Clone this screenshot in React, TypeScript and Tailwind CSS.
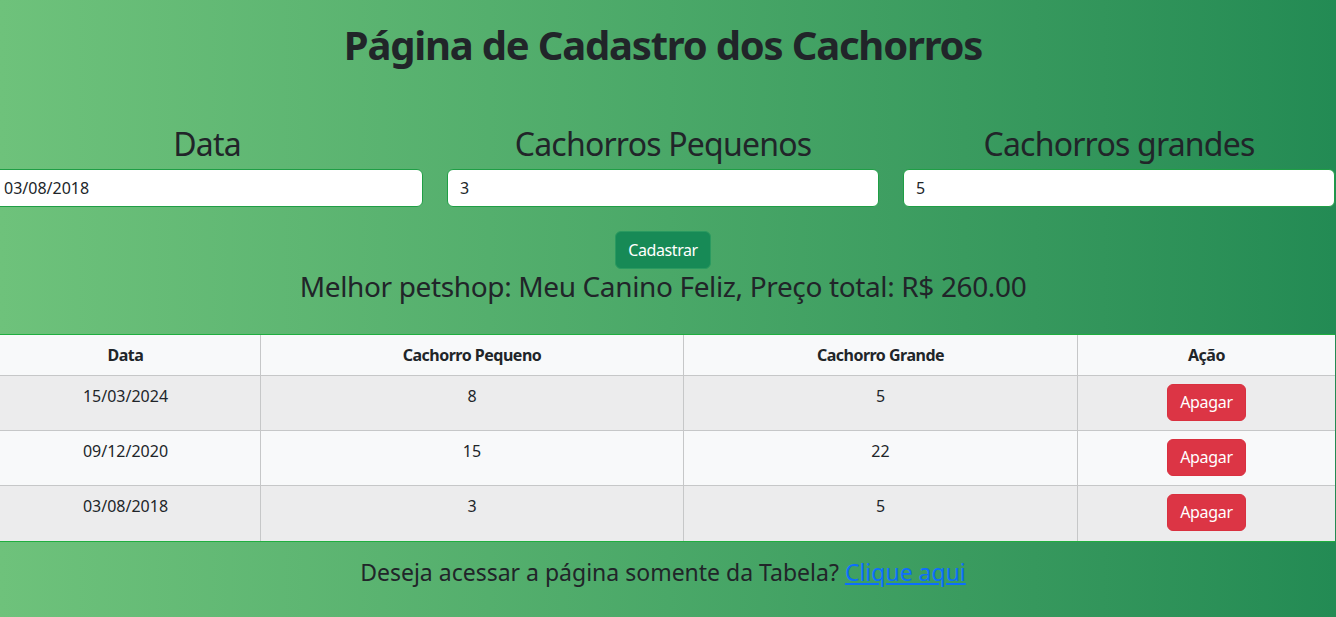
const rows = [
  { data: "15/03/2024", pequeno: "8", grande: "5" },
  { data: "09/12/2020", pequeno: "15", grande: "22" },
  { data: "03/08/2018", pequeno: "3", grande: "5" },
];

export default function App() {
  return (
    <div className="min-h-screen overflow-hidden bg-gradient-to-r from-[#6ec27b] via-[#4aa868] to-[#238b54] font-['Noto_Sans',sans-serif] text-[#212529]">
      <div className="-ml-[9px] w-[1344px]">
        <h1 className="pt-[21px] text-center text-[40px] font-bold leading-[1.2] tracking-[-1.2px]">
          Página de Cadastro dos Cachorros
        </h1>

        <div className="mt-[56px] grid grid-cols-3 gap-6">
          {[
            { label: "Data", value: "03/08/2018" },
            { label: "Cachorros Pequenos", value: "3" },
            { label: "Cachorros grandes", value: "5" },
          ].map((f) => (
            <div key={f.label}>
              <h2 className="mb-[6px] text-center text-[32px] leading-[1.2] tracking-[-0.8px]">{f.label}</h2>
              <input
                type="text"
                defaultValue={f.value}
                className="block h-[38px] w-full rounded-md border border-[#1f9e45] bg-white px-3 text-base text-[#212529] outline-none"
              />
            </div>
          ))}
        </div>

        <div className="mt-6 flex justify-center">
          <button className="h-[38px] rounded-md border border-[#2a9a60] bg-[#178a56] px-3 text-base tracking-[-0.4px] text-white">
            Cadastrar
          </button>
        </div>

        <h3 className="mt-[1px] text-center text-[28px] leading-[1.2] tracking-[-0.36px]">
          Melhor petshop: Meu Canino Feliz, Preço total: R$ 260.00
        </h3>

        <div className="mt-[30px] border-y border-[#1fae3f]">
          <table className="w-full border-separate border-spacing-0 text-base">
            <thead>
              <tr className="bg-[#f8f9fa]">
                <th className="h-[41px] w-[270px] border-r border-b border-[#c6c7c8] px-2 py-2 font-bold tracking-[-0.5px]">Data</th>
                <th className="h-[41px] w-[423px] border-r border-b border-[#c6c7c8] px-2 py-2 font-bold tracking-[-0.5px]">Cachorro Pequeno</th>
                <th className="h-[41px] w-[394px] border-r border-b border-[#c6c7c8] px-2 py-2 font-bold tracking-[-0.5px]">Cachorro Grande</th>
                <th className="h-[41px] border-b border-[#c6c7c8] px-2 py-2 font-bold tracking-[-0.5px]">Ação</th>
              </tr>
            </thead>
            <tbody>
              {rows.map((r, i) => {
                const last = i === rows.length - 1;
                const cell = last
                  ? "h-[55px] px-2 py-2 text-center align-top"
                  : "h-[55px] border-b border-[#c6c7c8] px-2 py-2 text-center align-top";
                return (
                  <tr key={r.data} className={i % 2 === 0 ? "bg-[#ececed]" : "bg-[#f8f9fa]"}>
                    <td className={cell + " border-r border-r-[#c6c7c8]"}>{r.data}</td>
                    <td className={cell + " border-r border-r-[#c6c7c8]"}>{r.pequeno}</td>
                    <td className={cell + " border-r border-r-[#c6c7c8]"}>{r.grande}</td>
                    <td className={cell}>
                      <button className="h-[37px] rounded-md border border-[#d9303f] bg-[#dc3545] px-3 text-base tracking-[-0.3px] text-white">
                        Apagar
                      </button>
                    </td>
                  </tr>
                );
              })}
            </tbody>
          </table>
        </div>

        <p className="pt-[17px] text-center text-[23px] leading-[1.2]">
          Deseja acessar a página somente da Tabela?{" "}
          <a href="#" className="text-[#0d6efd] underline">
            Clique aqui
          </a>
        </p>
      </div>
    </div>
  );
}
